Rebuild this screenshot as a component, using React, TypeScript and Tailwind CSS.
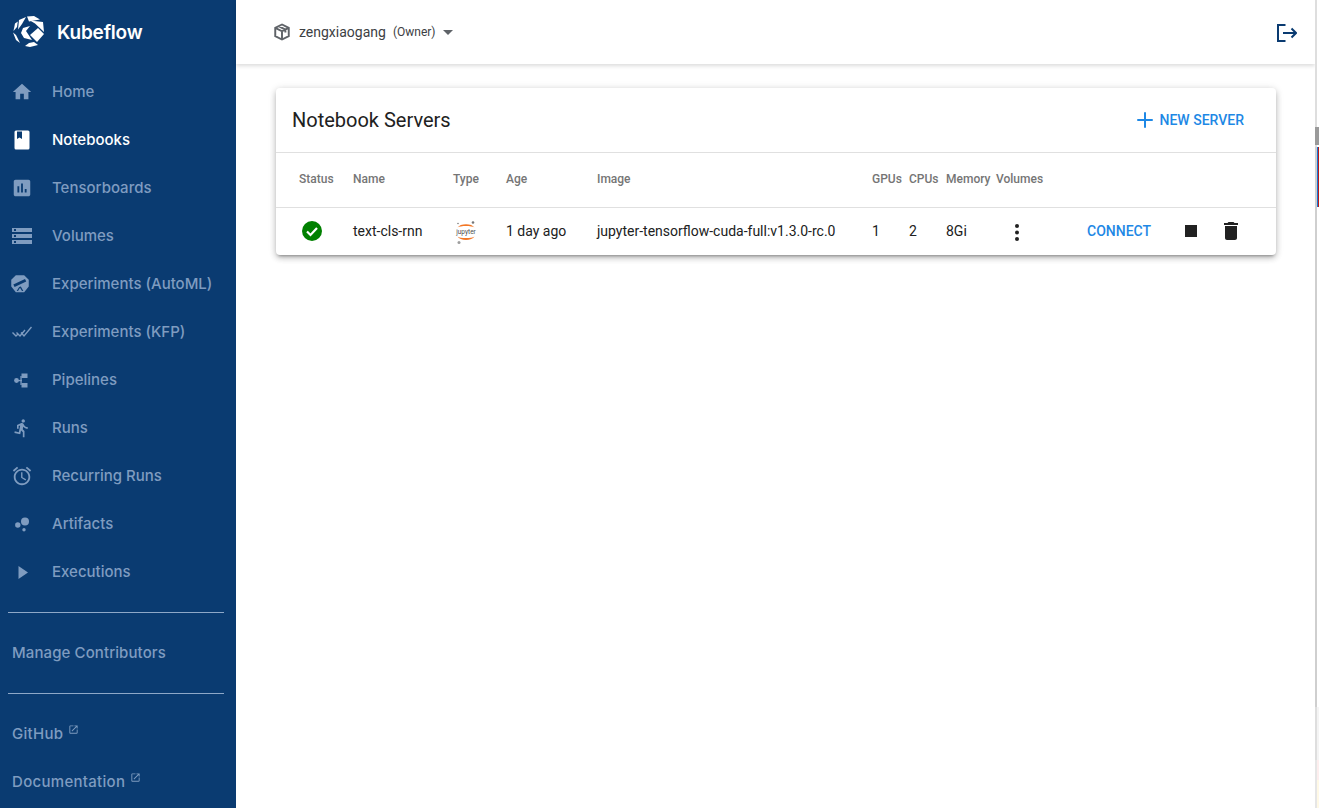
import { Plus } from "lucide-react";
import type { ReactNode } from "react";

const sidebarText = "text-[#7f9cc0]";

function Svg({ children, size = 20, className = "" }: { children: ReactNode; size?: number; className?: string }) {
  return (
    <svg width={size} height={size} viewBox="0 0 24 24" fill="currentColor" className={className}>
      {children}
    </svg>
  );
}

const navItems: { label: string; active?: boolean; icon: ReactNode }[] = [
  { label: "Home", icon: <Svg size={22}><path d="M10 20v-6h4v6h5v-8h3L12 3 2 12h3v8z" /></Svg> },
  {
    label: "Notebooks",
    active: true,
    icon: <Svg size={24}><path fillRule="evenodd" d="M6 2.500h12a1.500 1.500 0 0 1 1.500 1.500v16a1.500 1.500 0 0 1-1.500 1.500H6A1.500 1.500 0 0 1 4.500 20V4A1.500 1.500 0 0 1 6 2.500zM7 3.500v7.500l2.500-1.500L12 11V3.500z" /></Svg>,
  },
  {
    label: "Tensorboards",
    icon: <Svg size={22}><path d="M19 3H5c-1.100 0-2 .9-2 2v14c0 1.100.9 2 2 2h14c1.100 0 2-.9 2-2V5c0-1.100-.9-2-2-2zM9 17H7v-7h2v7zm4 0h-2V7h2v10zm4 0h-2v-4h2v4z" /></Svg>,
  },
  {
    label: "Volumes",
    icon: <Svg size={24}><path d="M2 20h20v-4H2v4zm2-3h2v2H4v-2zM2 4v4h20V4H2zm4 3H4V5h2v2zm-4 7h20v-4H2v4zm2-3h2v2H4v-2z" /></Svg>,
  },
  {
    label: "Experiments (AutoML)",
    icon: (
      <Svg size={20} className="-ml-[4px]">
        <path fillRule="evenodd" d="M7 1.500h10l5.500 5.500v8L17 22H7l-5.500-7V7zM4 12.500l14-6.500 1.500 3-14 6.500zM11 15.500l-3 5h1.600l2.400-4 2.400 4H16l-3-5.500z" />
      </Svg>
    ),
  },
  {
    label: "Experiments (KFP)",
    icon: (
      <svg width={20} height={12} viewBox="0 0 20 12" fill="none" stroke="currentColor" strokeWidth={1.400}>
        <path d="M0.500 6.500l3.500 3.500 2-2M4.500 6.500l3.500 3.500 5-6M9 6.500l3 3.500 7.500-9" />
      </svg>
    ),
  },
  {
    label: "Pipelines",
    icon: (
      <svg width={14} height={15} viewBox="0 0 14 15" fill="currentColor" className="-ml-[2px]">
        <circle cx="2.500" cy="7.500" r="2.400" />
        <rect x="4" y="6.900" width="4" height="1.300" />
        <rect x="6.400" y="3" width="1.300" height="9" />
        <rect x="7.500" y="0.500" width="6" height="4.500" />
        <rect x="7.500" y="10" width="6" height="4.500" />
      </svg>
    ),
  },
  {
    label: "Runs",
    icon: <Svg size={20}><path d="M13.490 5.480c1.100 0 2-.9 2-2s-.9-2-2-2-2 .9-2 2 .9 2 2 2zm-3.600 13.900l1-4.400 2.100 2v6h2v-7.500l-2.100-2 .6-3c1.300 1.500 3.300 2.500 5.500 2.500v-2c-1.900 0-3.500-1-4.300-2.400l-1-1.600c-.4-.6-1-1-1.700-1-.3 0-.5.1-.8.1l-5.200 2.200v4.700h2v-3.400l1.800-.7-1.600 8.100-4.900-1-.4 2 7 1.400z" /></Svg>,
  },
  {
    label: "Recurring Runs",
    icon: <Svg size={22}><path d="M22 5.720l-4.600-3.860-1.290 1.530 4.600 3.860L22 5.720zM7.880 3.390L6.600 1.860 2 5.710l1.290 1.530 4.590-3.850zM12.500 8H11v6l4.750 2.850.75-1.230-4-2.370V8zM12 4c-4.970 0-9 4.030-9 9s4.020 9 9 9c4.970 0 9-4.030 9-9s-4.030-9-9-9zm0 16c-3.870 0-7-3.130-7-7s3.130-7 7-7 7 3.130 7 7-3.130 7-7 7z" /></Svg>,
  },
  {
    label: "Artifacts",
    icon: (
      <svg width={15} height={15} viewBox="0 0 15 15" fill="currentColor">
        <circle cx="10" cy="4.500" r="4" />
        <circle cx="2.800" cy="8" r="2.700" />
        <circle cx="9" cy="12.800" r="1.700" />
      </svg>
    ),
  },
  {
    label: "Executions",
    icon: (
      <svg width={10} height={13} viewBox="0 0 10 13" fill="currentColor" className="ml-[2px]">
        <path d="M0.500 0v13L10 6.500z" />
      </svg>
    ),
  },
];

function NavRow({ label, active, icon }: { label: string; active?: boolean; icon: ReactNode }) {
  return (
    <div className={`flex h-12 items-center ${active ? "text-white" : sidebarText}`}>
      <div className="flex w-[52px] shrink-0 items-center justify-center pr-[8px]">{icon}</div>
      <span className="text-[15px] font-medium">{label}</span>
    </div>
  );
}

function ExternalIcon() {
  return (
    <svg width={11} height={11} viewBox="0 0 24 24" fill="currentColor" className="mb-[10px] ml-[5px]">
      <path d="M19 19H5V5h7V3H5a2 2 0 0 0-2 2v14a2 2 0 0 0 2 2h14c1.100 0 2-.9 2-2v-7h-2v7zM14 3v2h3.590l-9.830 9.830 1.410 1.410L19 6.410V10h2V3h-7z" />
    </svg>
  );
}

function KubeflowLogo() {
  return (
    <svg width={34} height={34} viewBox="0 0 34 34" fill="#fff">
      <path d="M6 4 13 1 9 8 5 13.500z" />
      <path d="M14 .5 21 0 27 3.500 16 5.500z" />
      <path d="M2 7.500 4.800 5.500 4 11 .5 15z" />
      <path d="M0 16.500 3 19 7 27 3 24z" />
      <path d="M17 4.500 30 6 31 16 22 7.500z" />
      <path d="M25 12 31 18 24 26 17 19z" />
      <path d="M10 12 17 10 13 15 19 24 11 22 8 17z" />
      <path d="M16 27 21 26 25 29 17 31 12 30z" />
    </svg>
  );
}

const tableCols = "grid grid-cols-[54px_100px_53px_91px_275px_37px_37px_50px_90px_1fr] items-center pl-[23px]";

export default function App() {
  return (
    <div className="flex h-[808px] w-[1319px] overflow-hidden bg-white font-['Roboto',sans-serif]">
      <aside className="flex w-[236px] shrink-0 flex-col bg-[#0a3b71] font-['Inter',sans-serif]">
        <div className="flex h-[68px] shrink-0 items-start pl-[13px] pt-[16px]">
          <KubeflowLogo />
          <span className="ml-[10px] mt-[3px] text-[19px] font-semibold tracking-[-0.2px] text-white">Kubeflow</span>
        </div>
        <nav>
          {navItems.map((item) => (
            <NavRow key={item.label} {...item} />
          ))}
        </nav>
        <div className="ml-[8px] mr-[12px] mt-[16px] border-t border-[#8ea8c8]" />
        <div className={`flex h-[80px] items-center pl-[12px] text-[15px] font-medium tracking-[0.1px] ${sidebarText}`}>Manage Contributors</div>
        <div className="ml-[8px] mr-[12px] border-t border-[#8ea8c8]" />
        <div className={`mt-[16px] pl-[12px] text-[15px] font-medium tracking-[0.3px] ${sidebarText}`}>
          <div className="flex h-12 items-center">GitHub<ExternalIcon /></div>
          <div className="flex h-12 items-center">Documentation<ExternalIcon /></div>
        </div>
      </aside>

      <div className="flex min-w-0 flex-1 flex-col">
        <header className="flex h-[64px] shrink-0 items-center justify-between bg-white pl-[37px] pr-[18px] shadow-[0_2px_4px_rgba(0,0,0,0.14)]">
          <div className="flex items-center text-[#3c4043]">
            <svg width={18} height={18} viewBox="0 0 24 24" fill="none" stroke="#5f6368" strokeWidth={2.600}>
              <path d="M12 2 3 6.500v11L12 22l9-4.500v-11zM3 6.500 12 11l9-4.500M12 11v11M7.500 4.300l9 4.500v4" />
            </svg>
            <span className="ml-[8px] text-[14px]">zengxiaogang</span>
            <span className="ml-[7px] text-[12px]">(Owner)</span>
            <span className="ml-[7px] h-0 w-0 border-x-[5px] border-t-[5px] border-x-transparent border-t-[#5f6368]" />
          </div>
          <svg width={21} height={20} viewBox="0 0 21 20" fill="none" stroke="#0a3b71" strokeWidth={2}>
            <path d="M9.500 3H2v16h7.500M7 11h13M15.500 6.500 20 11l-4.500 4.500" />
          </svg>
        </header>

        <main className="pl-[40px] pr-[39px] pt-[24px]">
          <section className="rounded-[4px] bg-white shadow-[0_3px_3px_-2px_rgba(0,0,0,0.3),0_3px_6px_0_rgba(0,0,0,0.2),0_1px_8px_0_rgba(0,0,0,0.12)]">
            <div className="flex h-[64px] items-center justify-between pl-[16px] pr-[32px]">
              <h1 className="text-[20px] text-[#212121]">Notebook Servers</h1>
              <button className="flex items-center text-[14px] font-medium text-[#1e88e5]">
                <Plus size={24} strokeWidth={2} className="mr-[3px]" />
                NEW SERVER
              </button>
            </div>
            <div className={`${tableCols} h-[56px] border-y border-[#e0e0e0] pb-[2px] text-[12px] font-medium text-[#757575]`}>
              <span>Status</span>
              <span>Name</span>
              <span>Type</span>
              <span>Age</span>
              <span>Image</span>
              <span>GPUs</span>
              <span>CPUs</span>
              <span>Memory</span>
              <span>Volumes</span>
              <span />
            </div>
            <div className={`${tableCols} h-[47px] text-[14px] text-[#212121]`}>
              <span>
                <svg width={22} height={22} viewBox="0 0 22 22" className="ml-[2px] -translate-y-px">
                  <circle cx="11" cy="11" r="10" fill="#008000" />
                  <path d="M6 11.500l3.500 3.500L16 8" fill="none" stroke="#fff" strokeWidth={2.200} />
                </svg>
              </span>
              <span>text-cls-rnn</span>
              <span>
                <svg width={24} height={26} viewBox="0 0 22 26" className="ml-px">
                  <path d="M2.500 8.500C5 4 17 4 19.500 8.500 17 6.500 5 6.500 2.500 8.500zM2.500 17.500C5 22 17 22 19.500 17.500 17 19.500 5 19.500 2.500 17.500z" fill="#f37726" />
                  <circle cx="18" cy="3.500" r="1.300" fill="#767677" />
                  <circle cx="3" cy="4.500" r=".7" fill="#616262" />
                  <circle cx="4" cy="23.500" r="1.500" fill="#9e9e9e" />
                  <text x="11" y="15" textAnchor="middle" fontSize="6.500" fill="#4e4e4e">jupyter</text>
                </svg>
              </span>
              <span>1 day ago</span>
              <span>jupyter-tensorflow-cuda-full:v1.3.0-rc.0</span>
              <span>1</span>
              <span>2</span>
              <span>8Gi</span>
              <span>
                <svg width={24} height={24} viewBox="0 0 24 24" fill="#212121" className="ml-[9px]">
                  <circle cx="12" cy="6" r="2" />
                  <circle cx="12" cy="12.500" r="2" />
                  <circle cx="12" cy="19" r="2" />
                </svg>
              </span>
              <div className="flex items-center pl-px">
                <span className="font-medium text-[#1e88e5]">CONNECT</span>
                <span className="ml-[34px] h-[12px] w-[12px] -translate-y-px bg-[#212121]" />
                <svg width={24} height={24} viewBox="0 0 24 24" fill="#212121" className="ml-[22px] -translate-y-px">
                  <path d="M6 19c0 1.100.9 2 2 2h8c1.100 0 2-.9 2-2V7H6v12zM19 4h-3.500l-1-1h-5l-1 1H5v2h14V4z" />
                </svg>
              </div>
            </div>
          </section>
        </main>
      </div>

      {/* sliver of the window behind, at the right edge */}
      <div className="flex w-[4px] shrink-0 flex-col">
        <div className="h-[127px] border-l-2 border-[#dedede] bg-white" />
        <div className="h-[18px] bg-[#9a9a9a]" />
        <div className="h-[2px] border-l-2 border-[#dedede] bg-white" />
        <div className="flex h-[60px] border-l-2 border-[#cfcfcf]">
          <div className="w-px bg-[#1976d2]" />
          <div className="w-px bg-[#b71c1c]" />
        </div>
        <div className="h-[500px] border-l-2 border-[#cfcfcf] bg-white" />
        <div className="h-[53px] border-l-2 border-[#dedede] bg-[#f4f4f4]" />
        <div className="h-[20px] border-l-2 border-[#e6e6e6] bg-[#fdeeee]" />
        <div className="flex-1 border-l-2 border-[#e6e6e6] bg-[#fff9e6]" />
      </div>
    </div>
  );
}
